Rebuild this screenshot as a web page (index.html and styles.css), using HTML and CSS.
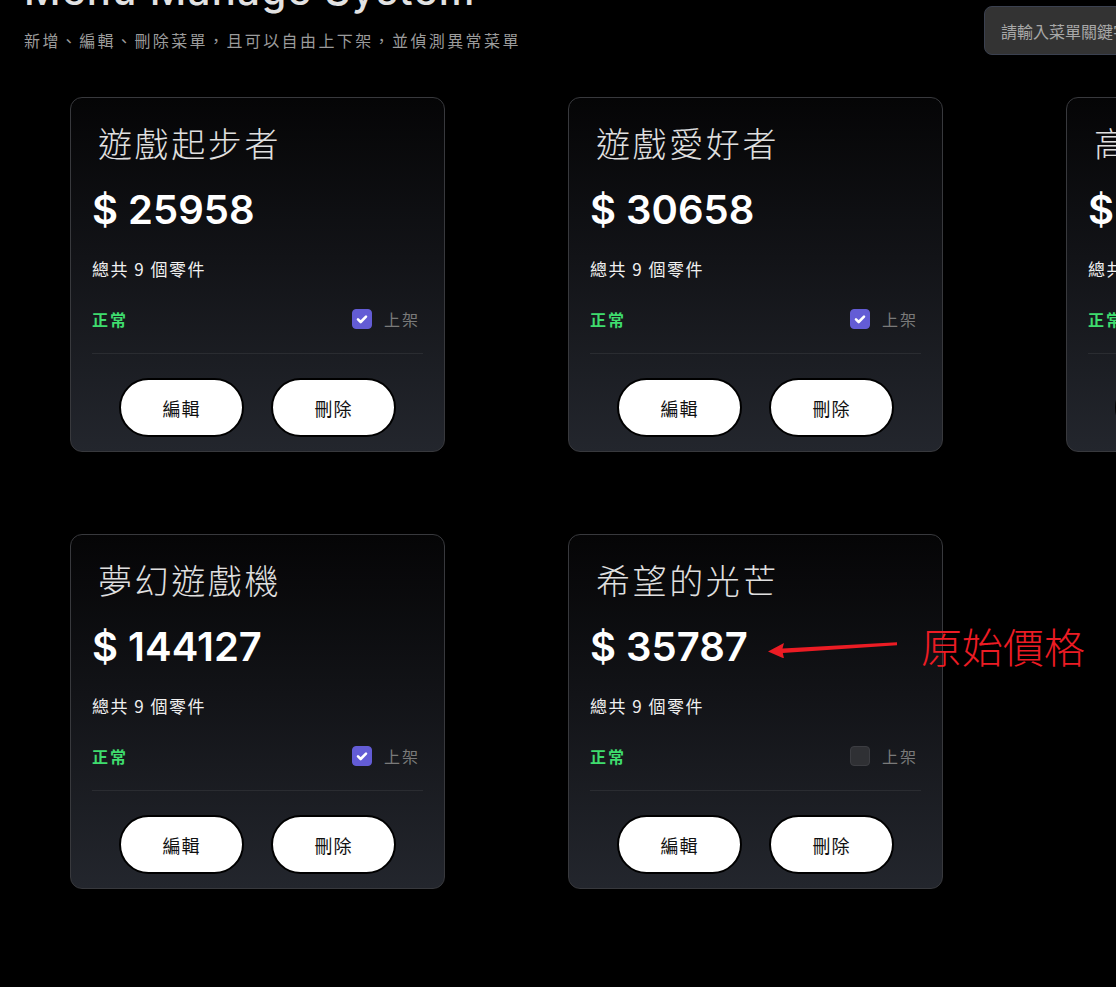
FILE: index.html
```html
<!DOCTYPE html>
<html lang="zh-Hant">
<head>
<meta charset="utf-8">
<title>Menu Manage System</title>
<link rel="stylesheet" href="styles.css">
</head>
<body>
<div class="page">
  <header class="header">
    <div class="heading">
      <h1 class="title">Menu Manage System</h1>
      <p class="subtitle">新增、編輯、刪除菜單，且可以自由上下架，並偵測異常菜單</p>
    </div>
    <input class="search" type="text" placeholder="請輸入菜單關鍵字">
  </header>

  <main class="grid">
    <section class="card">
      <h2 class="card-title">遊戲起步者</h2>
      <div class="price">$ 25958</div>
      <div class="parts">總共 9 個零件</div>
      <div class="status-row">
        <span class="status">正常</span>
        <label class="publish"><span class="box checked"><svg viewBox="0 0 20 20" width="20" height="20"><path d="M6 10.4l2.7 2.6L14 7.6" fill="none" stroke="#fff" stroke-width="2.6" stroke-linecap="round" stroke-linejoin="round"/></svg></span><span class="publish-text">上架</span></label>
      </div>
      <div class="divider"></div>
      <div class="actions">
        <button class="btn">編輯</button>
        <button class="btn">刪除</button>
      </div>
    </section>

    <section class="card">
      <h2 class="card-title">遊戲愛好者</h2>
      <div class="price">$ 30658</div>
      <div class="parts">總共 9 個零件</div>
      <div class="status-row">
        <span class="status">正常</span>
        <label class="publish"><span class="box checked"><svg viewBox="0 0 20 20" width="20" height="20"><path d="M6 10.4l2.7 2.6L14 7.6" fill="none" stroke="#fff" stroke-width="2.6" stroke-linecap="round" stroke-linejoin="round"/></svg></span><span class="publish-text">上架</span></label>
      </div>
      <div class="divider"></div>
      <div class="actions">
        <button class="btn">編輯</button>
        <button class="btn">刪除</button>
      </div>
    </section>

    <section class="card">
      <h2 class="card-title">高階玩家</h2>
      <div class="price">$ 52380</div>
      <div class="parts">總共 9 個零件</div>
      <div class="status-row">
        <span class="status">正常</span>
        <label class="publish"><span class="box checked"><svg viewBox="0 0 20 20" width="20" height="20"><path d="M6 10.4l2.7 2.6L14 7.6" fill="none" stroke="#fff" stroke-width="2.6" stroke-linecap="round" stroke-linejoin="round"/></svg></span><span class="publish-text">上架</span></label>
      </div>
      <div class="divider"></div>
      <div class="actions">
        <button class="btn">編輯</button>
        <button class="btn">刪除</button>
      </div>
    </section>

    <section class="card">
      <h2 class="card-title">夢幻遊戲機</h2>
      <div class="price">$ 144127</div>
      <div class="parts">總共 9 個零件</div>
      <div class="status-row">
        <span class="status">正常</span>
        <label class="publish"><span class="box checked"><svg viewBox="0 0 20 20" width="20" height="20"><path d="M6 10.4l2.7 2.6L14 7.6" fill="none" stroke="#fff" stroke-width="2.6" stroke-linecap="round" stroke-linejoin="round"/></svg></span><span class="publish-text">上架</span></label>
      </div>
      <div class="divider"></div>
      <div class="actions">
        <button class="btn">編輯</button>
        <button class="btn">刪除</button>
      </div>
    </section>

    <section class="card annotated">
      <h2 class="card-title">希望的光芒</h2>
      <div class="price">$ 35787</div>
      <div class="parts">總共 9 個零件</div>
      <div class="status-row">
        <span class="status">正常</span>
        <label class="publish"><span class="box"></span><span class="publish-text">上架</span></label>
      </div>
      <div class="divider"></div>
      <div class="actions">
        <button class="btn">編輯</button>
        <button class="btn">刪除</button>
      </div>
      <div class="note">
        <svg class="note-arrow" viewBox="0 0 140 20" width="140" height="20">
          <path d="M1 13.5 L17 5 L15.5 10.6 L130 4.2 L130 7.2 L15.8 15 L17 20.5 Z" fill="#ec1c24"/>
        </svg>
        <span class="note-text">原始價格</span>
      </div>
    </section>
  </main>
</div>
</body>
</html>
```

FILE: styles.css
```css
html, body {
  margin: 0;
  padding: 0;
  background: #000;
  overflow: hidden;
}

body {
  font-family: "Inter", "Noto Sans CJK TC", sans-serif;
  color: #fff;
}

.page {
  width: 1500px;
}

.header {
  display: flex;
  align-items: flex-start;
  width: 1250px;
  margin-top: -33px;
}

.heading {
  padding-left: 24px;
}

.title {
  margin: 0;
  font-family: "Inter", sans-serif;
  font-size: 40px;
  font-weight: 500;
  line-height: 48px;
  color: #e2e2e2;
  letter-spacing: 1.4px;
}

.subtitle {
  margin: 13px 0 0;
  font-family: "Noto Sans CJK TC", sans-serif;
  font-size: 16px;
  line-height: 24px;
  letter-spacing: 2.4px;
  color: #9b9b9b;
}

.search {
  margin-left: auto;
  margin-top: 39px;
  width: 266px;
  height: 49px;
  box-sizing: border-box;
  padding: 0 16px;
  background: #333;
  border: 1px solid #3b4150;
  border-radius: 8px;
  font-family: "Noto Sans CJK TC", sans-serif;
  font-size: 16px;
  color: #ddd;
  outline: none;
}

.search::placeholder {
  color: #a8a8a8;
}

.grid {
  display: grid;
  grid-template-columns: repeat(3, 375px);
  column-gap: 123px;
  row-gap: 82px;
  padding-left: 70px;
  margin-top: 42px;
}

.card {
  position: relative;
  box-sizing: border-box;
  height: 355px;
  padding: 23px 21px 13px 21px;
  border: 1px solid #38393d;
  border-radius: 12px;
  background: linear-gradient(180deg, #050506 0%, #121317 45%, #23262d 100%);
}

.card-title {
  margin: 0 0 0 6px;
  font-family: "Noto Sans CJK TC", sans-serif;
  font-size: 34px;
  font-weight: 300;
  line-height: 44px;
  letter-spacing: 2.6px;
  color: #e0e0e0;
}

.price {
  margin-top: 21px;
  font-family: "Inter", sans-serif;
  font-size: 40px;
  font-weight: 600;
  line-height: 48px;
  color: #fff;
}

.parts {
  margin-top: 23px;
  font-family: "Noto Sans CJK TC", sans-serif;
  font-size: 17px;
  line-height: 24px;
  letter-spacing: 1.5px;
  color: #f0f0f0;
}

.status-row {
  margin-top: 26px;
  height: 24px;
  display: flex;
  align-items: center;
  justify-content: space-between;
}

.status {
  font-family: "Noto Sans CJK TC", sans-serif;
  font-size: 16px;
  font-weight: 700;
  letter-spacing: 2px;
  color: #3fdc6e;
}

.publish {
  display: flex;
  align-items: center;
  gap: 12px;
  margin-right: 3px;
}

.box {
  width: 20px;
  height: 20px;
  box-sizing: border-box;
  border-radius: 4px;
  background: #2f3034;
  border: 1px solid #3c3d42;
  display: flex;
}

.box.checked {
  background: #635cd5;
  border-color: #635cd5;
}

.box svg {
  margin: -1px;
}

.publish-text {
  font-family: "Noto Sans CJK TC", sans-serif;
  font-size: 16px;
  letter-spacing: 2px;
  color: #7a7a7a;
}

.divider {
  margin-top: 22px;
  height: 1px;
  background: #2a2c31;
}

.actions {
  margin-top: 24px;
  display: flex;
  justify-content: center;
  gap: 27px;
}

.btn {
  width: 125px;
  height: 59px;
  box-sizing: border-box;
  border: 2px solid #000;
  border-radius: 30px;
  background: #fff;
  font-family: "Noto Sans CJK TC", sans-serif;
  font-size: 18px;
  color: #111;
  letter-spacing: 1px;
  padding: 0;
}

.note {
  position: absolute;
  left: 198px;
  top: 86px;
  display: flex;
  align-items: center;
  gap: 14px;
  white-space: nowrap;
}

.note-arrow {
  margin-top: 6px;
}

.note-text {
  font-family: "Noto Sans CJK TC", sans-serif;
  font-size: 41px;
  font-weight: 300;
  color: #ec1c24;
  line-height: 48px;
}
```
